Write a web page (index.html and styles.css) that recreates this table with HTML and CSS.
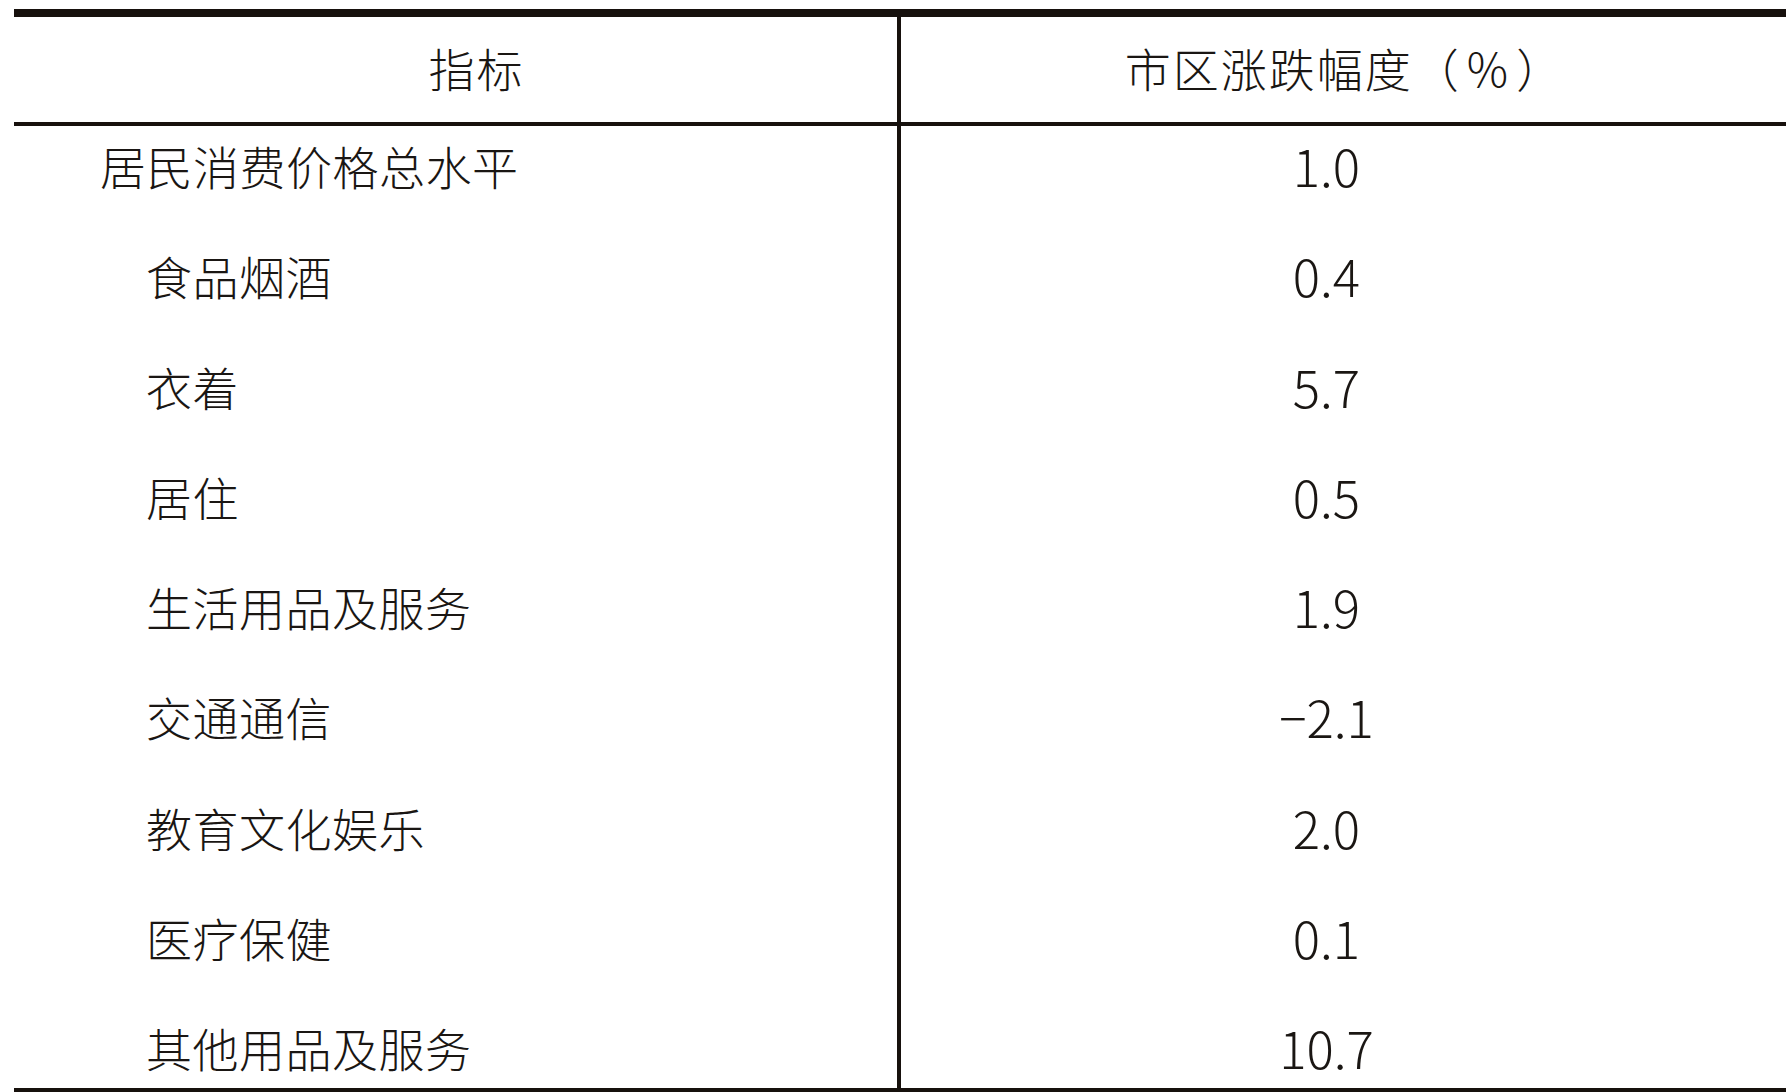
FILE: index.html
```html
<!DOCTYPE html>
<html lang="zh-CN">
<head>
<meta charset="utf-8">
<title>居民消费价格涨跌幅度</title>
<link rel="stylesheet" href="styles.css">
</head>
<body>
<div class="table">
  <div class="head">
    <div class="hcell hleft">指标</div>
    <div class="hcell hright">市区涨跌幅度（<span class="pct">%</span>）</div>
  </div>
  <div class="body">
    <div class="col names">
      <div class="row top">居民消费价格总水平</div>
      <div class="row sub">食品烟酒</div>
      <div class="row sub">衣着</div>
      <div class="row sub">居住</div>
      <div class="row sub">生活用品及服务</div>
      <div class="row sub">交通通信</div>
      <div class="row sub">教育文化娱乐</div>
      <div class="row sub">医疗保健</div>
      <div class="row sub">其他用品及服务</div>
    </div>
    <div class="col vals">
      <div class="row num">1.0</div>
      <div class="row num">0.4</div>
      <div class="row num">5.7</div>
      <div class="row num">0.5</div>
      <div class="row num">1.9</div>
      <div class="row num">−2.1</div>
      <div class="row num">2.0</div>
      <div class="row num">0.1</div>
      <div class="row num">10.7</div>
    </div>
  </div>
</div>
</body>
</html>
```
FILE: styles.css
```css
html, body {
  margin: 0;
  padding: 0;
  background: #ffffff;
}
body {
  padding: 9px 2px 0 14px;
  font-family: "Noto Sans CJK SC", "Noto Sans", sans-serif;
  font-weight: 300;
  color: #1a1613;
}
.table {
  width: 1772px;
  border-top: 8px solid #17110d;
  border-bottom: 4px solid #17110d;
}
.head {
  display: grid;
  grid-template-columns: 887px 881px;
  border-bottom: 4px solid #17110d;
}
.hcell {
  height: 105px;
  padding-bottom: 6px;
  box-sizing: border-box;
  display: flex;
  align-items: center;
  justify-content: center;
  font-size: 46px;
  line-height: 1;
}
.hleft {
  border-right: 4px solid #17110d;
  padding-left: 42px;
  letter-spacing: 2px;
}
.hright {
  padding-left: 6px;
  letter-spacing: 2px;
}
.pct {
  padding: 0 6px;
}
.body {
  display: grid;
  grid-template-columns: 887px 881px;
  height: 962px;
  overflow: hidden;
}
.col {
  display: flex;
  flex-direction: column;
  gap: 24.25px;
  padding-top: 0;
}
.names {
  border-right: 4px solid #17110d;
}
.row {
  height: 86px;
  line-height: 78px;
  font-size: 46px;
  white-space: nowrap;
  flex: none;
  letter-spacing: 0.5px;
}
.top {
  padding-left: 86px;
}
.sub {
  padding-left: 132px;
}
.num {
  text-align: center;
  padding-right: 30px;
  font-size: 51px;
  letter-spacing: 0;
}
```
